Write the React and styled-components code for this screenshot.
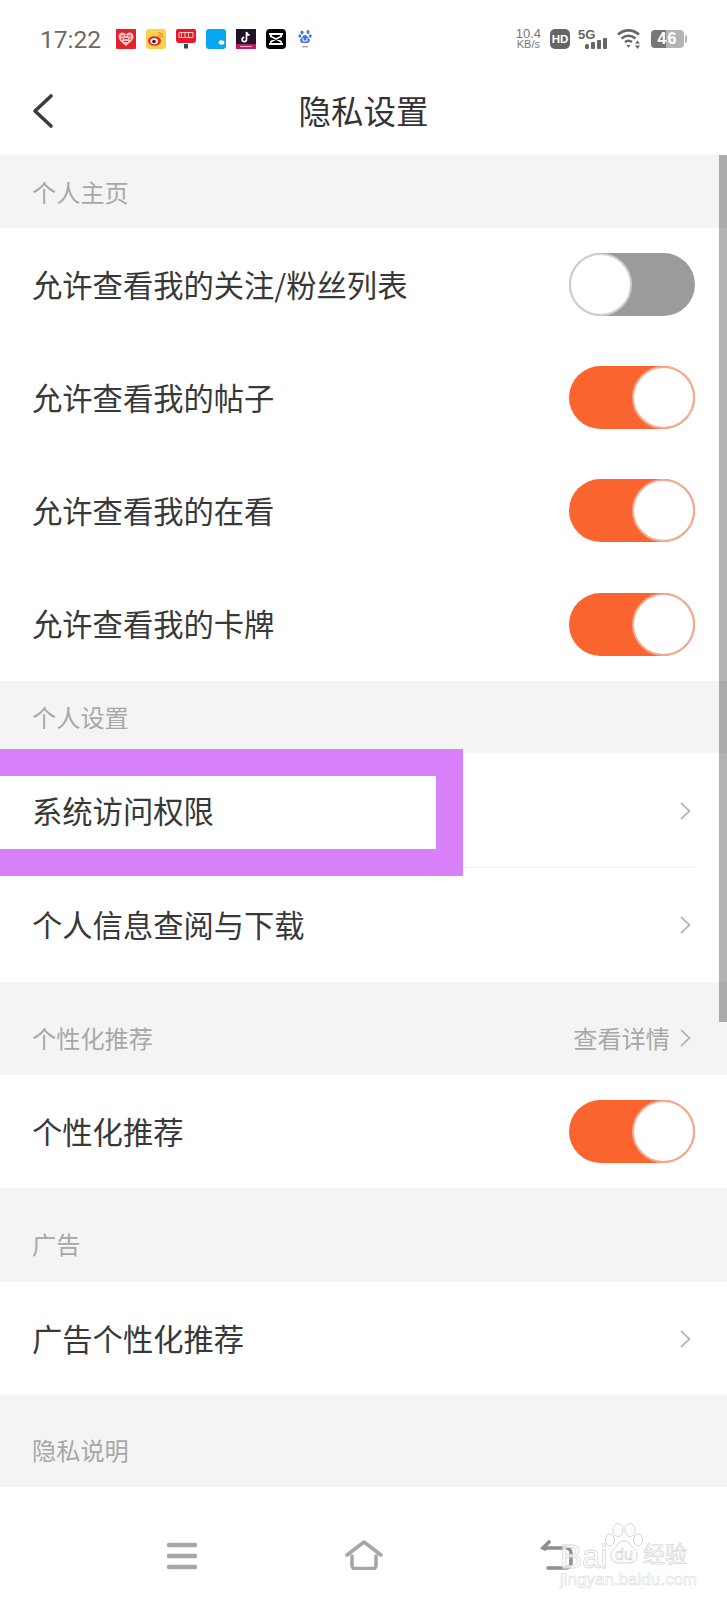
import React from 'react';
import styled, { createGlobalStyle } from 'styled-components';

const GlobalStyle = createGlobalStyle`
  html, body {
    margin: 0;
    padding: 0;
    background: #fff;
    font-family: "Noto Sans CJK SC", "Liberation Sans", sans-serif;
  }
`;

const Page = styled.div`
  position: relative;
  width: 727px;
  height: 1600px;
  overflow: hidden;
  display: flex;
  flex-direction: column;
  background: #fff;
`;

const StatusBar = styled.div`
  height: 78px;
  display: flex;
  align-items: center;
  padding: 0 40px;
  box-sizing: border-box;
`;

const Time = styled.span`
  font-family: "Roboto", "Liberation Sans", sans-serif;
  font-size: 24.5px;
  color: #6a6a6a;
  width: 76px;
`;

const NotifyIcons = styled.div`
  display: flex;
  gap: 10px;
  align-items: center;
`;

const NotifySvg = styled.svg`
  display: block;
  width: 20px;
  height: 20px;
`;

const SystemIcons = styled.div`
  margin-left: auto;
  display: flex;
  align-items: center;
  color: #666;
`;

const Speed = styled.div`
  font-family: "Liberation Sans", sans-serif;
  font-size: 13px;
  line-height: 11px;
  text-align: center;
  color: #777;
  margin-right: 9px;
  span {
    display: block;
    font-size: 11px;
  }
`;

const HdBadge = styled.span`
  width: 20px;
  height: 20px;
  border-radius: 5px;
  background: #666;
  color: #fff;
  font: bold 11.5px "Liberation Sans", sans-serif;
  display: flex;
  align-items: center;
  justify-content: center;
  margin-right: 8px;
`;

const SignalSvg = styled.svg`
  display: block;
  width: 31px;
  height: 22px;
  margin-right: 8px;
`;

const WifiSvg = styled.svg`
  display: block;
  width: 26px;
  height: 22px;
  margin-right: 8px;
`;

const Battery = styled.span`
  position: relative;
  width: 33px;
  height: 18px;
  border-radius: 4px;
  background: linear-gradient(90deg, #777 0%, #777 46%, #b4b4b4 46%, #b4b4b4 100%);
  color: #fff;
  font: bold 16px "Liberation Sans", sans-serif;
  letter-spacing: 1px;
  display: flex;
  align-items: center;
  justify-content: center;
  margin-right: 3px;
  &::after {
    content: '';
    position: absolute;
    right: -3px;
    top: 5px;
    width: 2px;
    height: 8px;
    border-radius: 0 2px 2px 0;
    background: #b4b4b4;
  }
`;

const NavBar = styled.div`
  height: 77px;
  position: relative;
  display: flex;
  align-items: center;
  justify-content: center;
`;

const BackButton = styled.svg`
  position: absolute;
  left: 30px;
  top: 15px;
  width: 26px;
  height: 40px;
`;

const Title = styled.h1`
  margin: 0 0 14px;
  font-size: 32.5px;
  font-weight: 400;
  color: #333;
`;

const SectionHead = styled.div`
  height: ${p => p.$height}px;
  box-sizing: border-box;
  background: #f4f4f4;
  padding: 0 32px ${p => p.$bottom || 18}px 32px;
  display: flex;
  align-items: flex-end;
  justify-content: space-between;
  font-size: 24.2px;
  line-height: 36px;
  color: #a8a8a8;
`;

const DetailLink = styled.span`
  display: flex;
  align-items: center;
  gap: 9px;
  margin-right: 3px;
`;

const Row = styled.div`
  height: ${p => p.$height || 113}px;
  box-sizing: border-box;
  padding: 0 32px;
  display: flex;
  align-items: center;
  justify-content: space-between;
  background: #fff;
  position: relative;
  ${p =>
    p.$divider &&
    `
    &::after {
      content: '';
      position: absolute;
      left: 32px;
      right: 33px;
      bottom: 0;
      height: 1px;
      background: #f0f0f0;
    }
  `}
`;

const RowLabel = styled.span`
  font-size: 30.3px;
  color: #383838;
  padding-bottom: 2px;
`;

const Track = styled.div`
  width: 126px;
  height: 63px;
  border-radius: 32px;
  background: ${p => (p.$on ? '#f9642f' : '#9b9b9b')};
  display: flex;
  justify-content: ${p => (p.$on ? 'flex-end' : 'flex-start')};
`;

const Thumb = styled.div`
  width: 63px;
  height: 63px;
  box-sizing: border-box;
  border-radius: 50%;
  background: #fff;
  border: 2px solid ${p => (p.$on ? '#f2ab90' : '#cfcfcf')};
`;

const ChevronSvg = styled.svg`
  display: block;
  width: 13px;
  height: 20px;
  margin-right: ${p => (p.$flush ? 0 : 3)}px;
`;

const BottomNav = styled.div`
  flex: 1;
  background: #fff;
`;

const NavIcons = styled.div`
  display: grid;
  grid-template-columns: 167px 30px 147px 40px 156px 34px;
  padding-top: 53px;
  align-items: center;
`;

const NavSvg = styled.svg`
  display: block;
  grid-column: ${p => p.$col};
  width: ${p => p.$w}px;
  height: 30px;
`;

// purple marker the author drew over the screenshot
const Highlight = styled.div`
  position: absolute;
  left: -30px;
  top: 749px;
  width: 493px;
  height: 127px;
  box-sizing: border-box;
  border: 27px solid #d980fb;
`;

const ScrollThumb = styled.div`
  position: absolute;
  right: 0;
  top: 155px;
  width: 8px;
  height: 867px;
  background: rgba(0, 0, 0, 0.3);
`;

const Watermark = styled.div`
  position: absolute;
  left: 558px;
  top: 1520px;
  width: 134px;
  height: 68px;
  pointer-events: none;
`;

const WatermarkBrand = styled.div`
  position: absolute;
  left: 2px;
  top: 18px;
  font-family: "Liberation Sans", sans-serif;
  font-size: 33px;
  line-height: 38px;
  color: rgba(255, 255, 255, 0.7);
  -webkit-text-stroke: 0.8px #d8d8d8;
`;

const WatermarkCn = styled.span`
  position: absolute;
  left: 85px;
  top: 19px;
  font-size: 22px;
  line-height: 26px;
  white-space: nowrap;
  color: #fff;
  -webkit-text-stroke: 0.7px #d4d4d4;
`;

const WatermarkUrl = styled.div`
  position: absolute;
  left: 2px;
  top: 51px;
  font-family: "Liberation Sans", sans-serif;
  font-size: 17px;
  line-height: 18px;
  color: #fff;
  -webkit-text-stroke: 0.5px #d8d8d8;
  white-space: nowrap;
`;

const WatermarkPaw = styled.svg`
  position: absolute;
  left: 47px;
  top: 3px;
  width: 38px;
  height: 46px;
`;

const Chevron = ({ flush }) => (
  <ChevronSvg $flush={flush} viewBox="0 0 13 20">
    <path d="M2 2l8.5 8L2 18" fill="none" stroke="#b8b8b8" strokeWidth="1.8" />
  </ChevronSvg>
);

const Toggle = ({ on }) => (
  <Track $on={on}>
    <Thumb $on={on} />
  </Track>
);

const NotifyRow = () => (
  <NotifyIcons>
    {/* taobao style heart */}
    <NotifySvg viewBox="0 0 20 20">
      <rect width="20" height="20" rx="1" fill="#e3202c" />
      <path d="M10 17C5 13 2.5 10.5 2.5 7.5 2.5 5 4.5 3.5 6.5 3.5c1.5 0 2.7.8 3.5 2 .8-1.2 2-2 3.5-2 2 0 4 1.5 4 4 0 3-2.5 5.5-7.5 9.5z" fill="#f7c4c4" />
      <path d="M5 7h3M9 6.5h2M12 7h3M5 10h2M8 9.5h4M13 10h2M8 12.5h4" stroke="#e3202c" strokeWidth="1.1" />
    </NotifySvg>
    {/* weibo */}
    <NotifySvg viewBox="0 0 20 20">
      <rect width="20" height="20" rx="3" fill="#fbd24e" />
      <ellipse cx="8.5" cy="12" rx="6.5" ry="4.8" fill="#e6262e" />
      <ellipse cx="8.2" cy="12.3" rx="3.8" ry="3" fill="#fff" />
      <circle cx="8" cy="12.5" r="1.8" fill="#222" />
      <path d="M12 3.5a5 5 0 0 1 5 5M12 6a2.5 2.5 0 0 1 2.5 2.5" fill="none" stroke="#f08a1d" strokeWidth="1.2" />
    </NotifySvg>
    {/* red sign */}
    <NotifySvg viewBox="0 0 20 20">
      <path d="M2 0h16a2 2 0 0 1 2 2v9a3 3 0 0 1-3 3H3a3 3 0 0 1-3-3V2a2 2 0 0 1 2-2z" fill="#e8182a" />
      <path d="M3 3.5h14v5H3z" fill="none" stroke="#f9c9c9" strokeWidth="1" />
      <path d="M5.5 4v4M9 4v4M12.5 4v4" stroke="#f9c9c9" strokeWidth="1" />
      <rect x="8" y="15" width="4" height="4.5" fill="#21505f" />
    </NotifySvg>
    {/* blue tile */}
    <NotifySvg viewBox="0 0 20 20">
      <path d="M3 0h14a3 3 0 0 1 3 3v14a3 3 0 0 1-3 3H3a3 3 0 0 1-3-3V3a3 3 0 0 1 3-3z" fill="#0ba6f1" />
      <ellipse cx="15.5" cy="13.5" rx="2.8" ry="2.2" fill="#fff" />
    </NotifySvg>
    {/* douyin */}
    <NotifySvg viewBox="0 0 20 20">
      <rect width="20" height="15" fill="#22122a" />
      <rect y="15" width="20" height="5" fill="#c21a5e" />
      <path d="M10.5 3v7.5a2.2 2.2 0 1 1-2.2-2.2M10.5 3c.3 1.8 1.5 2.9 3.2 3" fill="none" stroke="#fff" strokeWidth="1.7" />
      <path d="M4 17.5h12" stroke="#f5b7cf" strokeWidth="1" />
    </NotifySvg>
    {/* capcut */}
    <NotifySvg viewBox="0 0 20 20">
      <rect width="20" height="20" rx="4" fill="#000" />
      <path d="M3 5h14M3 15h14M5 5.5v2l10 5v2M15 5.5v2l-10 5v2" fill="none" stroke="#fff" strokeWidth="1.8" />
    </NotifySvg>
    {/* baidu paw */}
    <NotifySvg viewBox="0 0 20 20">
      <g fill="#3f74d8">
        <ellipse cx="6" cy="3.5" rx="1.5" ry="2" />
        <ellipse cx="12" cy="3" rx="1.5" ry="2" />
        <ellipse cx="3.8" cy="7" rx="1.4" ry="1.8" />
        <ellipse cx="14.3" cy="7" rx="1.4" ry="1.8" />
        <path d="M9 6c2 0 2.5 2 4 3.5s1 4.5-2 4.5H7c-3 0-3.5-3-2-4.5S7 6 9 6z" />
      </g>
      <path d="M7 9v3h4V9" fill="none" stroke="#fff" strokeWidth="1" />
      <path d="M6 17.8h6" stroke="#b8435a" strokeWidth="0.8" />
    </NotifySvg>
  </NotifyIcons>
);

const StatusIcons = () => (
  <SystemIcons>
    <Speed>
      10.4
      <span>KB/s</span>
    </Speed>
    <HdBadge>HD</HdBadge>
    <SignalSvg viewBox="0 0 31 22">
      <text x="0" y="11" fontFamily="Liberation Sans" fontWeight="bold" fontSize="13" fill="#666">5G</text>
      <rect x="7" y="16" width="4" height="5" rx="1.5" fill="#666" />
      <rect x="13" y="14" width="4" height="7" rx="1" fill="#666" />
      <rect x="19" y="12" width="4" height="9" rx="1" fill="#666" />
      <rect x="25" y="10" width="4" height="11" rx="1" fill="#666" />
    </SignalSvg>
    <WifiSvg viewBox="0 0 26 22">
      <g fill="none" stroke="#666" strokeWidth="2.6">
        <path d="M1 6.5C7.5 1 15.5 1 22 6.5" />
        <path d="M4.5 10.5c4.5-3.5 9.5-3.5 14 0" />
        <path d="M8 14c2.5-1.8 4.5-1.8 7 0" />
      </g>
      <path d="M9.5 17h4l-2 3z" fill="#666" />
      <path d="M20.5 12.5l2.5 3h-5zM20.5 21l2.5-3.5h-5z" fill="#666" />
    </WifiSvg>
    <Battery>46</Battery>
  </SystemIcons>
);

const App = () => (
  <Page>
    <GlobalStyle />
    <StatusBar>
      <Time>17:22</Time>
      <NotifyRow />
      <StatusIcons />
    </StatusBar>
    <NavBar>
      <BackButton viewBox="0 0 26 40">
        <path d="M21 3L5 18 21 33" fill="none" stroke="#3c3c3c" strokeWidth="3.6" strokeLinecap="round" strokeLinejoin="round" />
      </BackButton>
      <Title>隐私设置</Title>
    </NavBar>

    <SectionHead $height={73}>个人主页</SectionHead>
    <Row>
      <RowLabel>允许查看我的关注/粉丝列表</RowLabel>
      <Toggle />
    </Row>
    <Row>
      <RowLabel>允许查看我的帖子</RowLabel>
      <Toggle on />
    </Row>
    <Row>
      <RowLabel>允许查看我的在看</RowLabel>
      <Toggle on />
    </Row>
    <Row $height={114}>
      <RowLabel>允许查看我的卡牌</RowLabel>
      <Toggle on />
    </Row>

    <SectionHead $height={72}>个人设置</SectionHead>
    <Row $height={115} $divider>
      <RowLabel>系统访问权限</RowLabel>
      <Chevron />
    </Row>
    <Row $height={114}>
      <RowLabel>个人信息查阅与下载</RowLabel>
      <Chevron />
    </Row>

    <SectionHead $height={93} $bottom={19}>
      个性化推荐
      <DetailLink>
        查看详情
        <Chevron flush />
      </DetailLink>
    </SectionHead>
    <Row>
      <RowLabel>个性化推荐</RowLabel>
      <Toggle on />
    </Row>

    <SectionHead $height={94} $bottom={20}>广告</SectionHead>
    <Row>
      <RowLabel>广告个性化推荐</RowLabel>
      <Chevron />
    </Row>

    <SectionHead $height={92} $bottom={19}>隐私说明</SectionHead>

    <BottomNav>
      <NavIcons>
        <NavSvg $col={2} $w={30} viewBox="0 0 30 30">
          <path d="M2 5h26M2 16h26M2 27h26" stroke="#a6a6a6" strokeWidth="4.5" strokeLinecap="round" />
        </NavSvg>
        <NavSvg $col={4} $w={40} viewBox="0 0 40 30">
          <path d="M3 15L20 2l17 13" fill="none" stroke="#a6a6a6" strokeWidth="3.6" strokeLinecap="round" strokeLinejoin="round" />
          <path d="M8 16v9.5a3 3 0 0 0 3 3h18a3 3 0 0 0 3-3V16" fill="none" stroke="#a6a6a6" strokeWidth="3.6" strokeLinecap="round" />
        </NavSvg>
        <NavSvg $col={6} $w={34} viewBox="0 0 34 30">
          <path d="M3 8h23a5 5 0 0 1 5 5v10a5 5 0 0 1-5 5H8" fill="none" stroke="#8f8f8f" strokeWidth="3.6" strokeLinecap="round" />
          <path d="M9 2L3 8l2 1" fill="none" stroke="#8f8f8f" strokeWidth="3.6" strokeLinecap="round" />
        </NavSvg>
      </NavIcons>
    </BottomNav>

    <Highlight />
    <ScrollThumb />

    <Watermark>
      <WatermarkBrand>Bai</WatermarkBrand>
      <WatermarkPaw viewBox="0 0 38 46">
        <g fill="rgba(255,255,255,0.8)" stroke="#d4d4d4" strokeWidth="1">
          <ellipse cx="13" cy="7" rx="5" ry="6.5" />
          <ellipse cx="25" cy="7" rx="5" ry="6.5" />
          <ellipse cx="5" cy="17" rx="4.5" ry="6" />
          <ellipse cx="33" cy="17" rx="4.5" ry="6" />
          <path d="M19 18c6 0 7 6 11 9s3 13-6 13H14C5 40 4 30 8 27s5-9 11-9z" />
        </g>
        <text x="19" y="37" textAnchor="middle" fontFamily="Liberation Sans" fontSize="16" fill="#fff" stroke="#d0d0d0" strokeWidth="0.6">du</text>
      </WatermarkPaw>
      <WatermarkCn>经验</WatermarkCn>
      <WatermarkUrl>jingyan.baidu.com</WatermarkUrl>
    </Watermark>
  </Page>
);

export default App;
